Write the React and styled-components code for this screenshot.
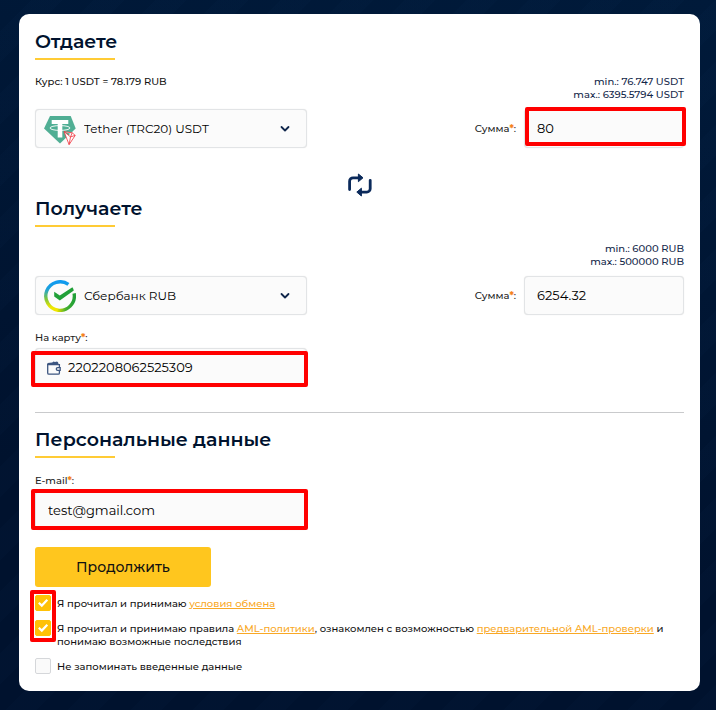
import { useId, useState } from 'react';
import styled, { createGlobalStyle } from 'styled-components';

const GlobalStyle = createGlobalStyle`
  * {
    box-sizing: border-box;
  }
  body {
    margin: 0;
    background-color: #00122e;
    background-image: repeating-linear-gradient(
        135deg,
        rgba(255, 255, 255, 0) 0 22px,
        rgba(60, 120, 190, 0.02) 22px 44px
      ),
      linear-gradient(10deg, #00122e 30%, #001a3a 100%);
    color: #111;
    font-family: Montserrat, Inter, 'Liberation Sans', sans-serif;
    font-size: 10px;
    font-weight: 500;
    line-height: 13px;
  }
`;

const Page = styled.main`
  padding: 14px 16px 19px 19px;
`;

const Card = styled.form`
  background-color: #fff;
  border-radius: 10px;
  padding: 16px 16px 17px;
`;

const Title = styled.h2`
  margin: 0;
  color: #00122e;
  font-size: 19px;
  font-weight: 600;
  line-height: 24px;
  &::after {
    content: '';
    display: block;
    width: 80px;
    height: 2px;
    margin-top: 4px;
    background-color: #ffcb35;
  }
`;

const InfoRow = styled.div`
  display: flex;
  justify-content: space-between;
  margin: 15px 0 8px;
  min-height: 26px;
`;

const Limits = styled.div`
  margin-left: auto;
  color: #14284a;
  text-align: right;
`;

const FieldRow = styled.div`
  display: flex;
  align-items: center;
  justify-content: space-between;
`;

const AmountField = styled.div`
  display: flex;
  align-items: center;
  gap: 8px;
`;

const FieldLabel = styled.label`
  color: #222;
  > span {
    color: #f58220;
    font-weight: 700;
  }
`;

const StackedField = styled.div`
  display: flex;
  flex-direction: column;
  align-items: flex-start;
  gap: 4px;
  margin-top: 16px;
`;

const InputWrap = styled.div`
  position: relative;
  width: ${({ $amount }) => ($amount ? '160px' : '272px')};
  max-width: 100%;
  > svg {
    position: absolute;
    top: 50%;
    transform: translateY(-50%);
    pointer-events: none;
  }
  > svg.currency {
    left: 9px;
  }
  > svg.wallet {
    left: 12px;
  }
  > svg.arrow {
    right: 17px;
  }
`;

const Input = styled.input`
  display: block;
  width: 100%;
  height: 39px;
  padding: 0 12px 2px ${({ $withIcon }) => ($withIcon ? '32px' : '12px')};
  border: 1px solid #e2e4e6;
  border-radius: 4px;
  outline: none;
  background-color: #fbfbfb;
  box-shadow: 0 0 1px rgba(0, 0, 0, 0.15);
  color: #000;
  font-family: inherit;
  font-size: 13px;
`;

const Select = styled.select`
  display: block;
  width: 100%;
  height: 39px;
  padding: 0 40px 1px 48px;
  border: 1px solid #e2e4e6;
  border-radius: 4px;
  outline: none;
  appearance: none;
  background-color: #fbfbfb;
  box-shadow: 0 0 1px rgba(0, 0, 0, 0.15);
  color: #000;
  font-family: inherit;
  font-size: 12px;
`;

// red frame over the fields the user has to fill in
const Marker = styled.span`
  position: absolute;
  inset: ${({ $inset }) => $inset};
  border: 4px solid #f00;
  border-radius: 2px;
  pointer-events: none;
`;

const SwapRow = styled.div`
  display: flex;
  justify-content: center;
  padding-top: 25px;
`;

const SwapButton = styled.button`
  display: block;
  padding: 0;
  border: 0;
  background: none;
  cursor: pointer;
  > svg {
    display: block;
  }
`;

const Divider = styled.hr`
  height: 1px;
  margin: 25px 0 15px;
  border: 0;
  background-color: #c9cacc;
`;

const SubmitButton = styled.button`
  display: block;
  width: 176px;
  height: 40px;
  margin: 17px 0 8px;
  border: 0;
  border-radius: 3px;
  background-color: #ffc61e;
  color: #111;
  font-family: inherit;
  font-size: 14px;
  font-weight: 500;
  cursor: pointer;
`;

const Agreements = styled.div`
  display: flex;
  flex-direction: column;
  gap: 9px;
`;

const RequiredAgreements = styled.div`
  position: relative;
  display: flex;
  flex-direction: column;
  gap: 9px;
  > span {
    right: auto;
    width: 26px;
    height: 52px;
  }
`;

const CheckRow = styled.div`
  display: flex;
  align-items: flex-start;
  gap: 6px;
  > label {
    padding: 2px 0 1px;
  }
  a {
    color: #f9a825;
    text-decoration: underline;
  }
`;

const Checkbox = styled.input`
  flex: none;
  width: 16px;
  height: 16px;
  margin: 0;
  border: 1px solid #d5d7da;
  border-radius: 2px;
  appearance: none;
  background-color: #fafafa;
  &:checked {
    border-color: #ffc107;
    background-color: #ffc107;
    background-image: url("data:image/svg+xml,%3Csvg xmlns='http://www.w3.org/2000/svg' viewBox='0 0 14 14'%3E%3Cpath d='M2.8 6.8L5.8 9.6L11.3 3.8' fill='none' stroke='white' stroke-width='2.2'/%3E%3C/svg%3E");
  }
`;

function TetherIcon() {
  return (
    <svg className="currency" width="32" height="34" viewBox="0 0 32 34">
      <path d="M6 4h20.7l5 12.6L16 31.6 0 16.6z" fill="#50ae94" />
      <path d="M7.7 8h16.6v4h-6v13.6h-4.6V12h-6z" fill="#fff" />
      <ellipse
        cx="16"
        cy="16"
        rx="10"
        ry="2.4"
        fill="none"
        stroke="#fff"
        strokeWidth="0.9"
      />
      <path
        d="M20 19.6l8.2 1.2 3 2.6-6.1 9.2zM20 19.6l6.5 5.3 4.7-1.5M26.5 24.9l-1.4 7.7M26.5 24.9l1.7-4.1"
        fill="#fff"
        stroke="#f0323c"
        strokeWidth="0.8"
        strokeLinejoin="round"
      />
    </svg>
  );
}

function SberIcon() {
  return (
    <svg className="currency" width="32" height="32" viewBox="0 0 32 32">
      <defs>
        <linearGradient id="sberLeft" x1="0" y1="0" x2="0" y2="1">
          <stop offset="0" stopColor="#0f9af0" />
          <stop offset="0.25" stopColor="#1ba0dc" />
          <stop offset="0.6" stopColor="#7cc63c" />
          <stop offset="0.9" stopColor="#f0e600" />
        </linearGradient>
        <linearGradient id="sberRight" x1="0" y1="0" x2="1" y2="0">
          <stop offset="0" stopColor="#e2e000" />
          <stop offset="0.5" stopColor="#45ae2c" />
          <stop offset="1" stopColor="#21a038" />
        </linearGradient>
      </defs>
      <g fill="none" strokeWidth="3.4">
        <path
          d="M24.4 4.4A14.3 14.3 0 1 0 14 30.2"
          stroke="url(#sberLeft)"
        />
        <path
          d="M13.5 30.1A14.3 14.3 0 0 0 30.1 13.4"
          stroke="url(#sberRight)"
        />
      </g>
      <path
        d="M10.2 11.8l5.6 3.6L28.4 7.2c.7 1 1.1 2 1.4 3.4L15.8 20.4l-5.6-3.8z"
        fill="#21a038"
      />
    </svg>
  );
}

function WalletIcon() {
  return (
    <svg className="wallet" width="14" height="14" viewBox="0 0 14 14">
      <g fill="none" stroke="#3d5680" strokeWidth="1.3">
        <path d="M12.4 6V3.6H.7V11.9c0 .8.4 1.2 1.2 1.2h9.3c.8 0 1.2-.4 1.2-1.2V10" />
        <path d="M13.2 6.6h-2.5a1.4 1.4 0 0 0 0 2.8h2.5z" />
      </g>
      <path
        d="M0 3.8L.6 2l4.6-.6L6.6.4 8 1l2-.6 1 .8.8 2.6z"
        fill="#3d5680"
      />
    </svg>
  );
}

function ArrowIcon() {
  return (
    <svg className="arrow" width="10" height="8" viewBox="0 0 10 8">
      <path
        d="M1.5 2L5 5.5 8.5 2"
        fill="none"
        stroke="#10264b"
        strokeWidth="1.8"
        strokeLinecap="round"
        strokeLinejoin="round"
      />
    </svg>
  );
}

function SwapIcon() {
  return (
    <svg width="24" height="24" viewBox="0 0 24 24">
      <g
        fill="none"
        stroke="#0b2a5b"
        strokeWidth="2.8"
        strokeLinecap="round"
        strokeLinejoin="round"
      >
        <path d="M1.6 16.5V8.2a3.4 3.4 0 0 1 3.4-3.4h6.5" />
        <path d="M22.2 7.3v8.4a3.4 3.4 0 0 1-3.4 3.4h-6.5" />
      </g>
      <g fill="#0b2a5b" stroke="#0b2a5b" strokeWidth="1" strokeLinejoin="round">
        <path d="M10.4 1L15 4.8l-4.6 3.9z" />
        <path d="M13.4 15.2l-4.6 3.9 4.6 3.9z" />
      </g>
    </svg>
  );
}

function Amount({ value, marked }) {
  const id = useId();

  return (
    <AmountField>
      <FieldLabel htmlFor={id}>
        Сумма<span>*</span>:
      </FieldLabel>
      <InputWrap $amount>
        <Input id={id} defaultValue={value} inputMode="decimal" />
        {marked && <Marker $inset="-2px -2px 2px 1px" />}
      </InputWrap>
    </AmountField>
  );
}

function Currency({ icon, name, label }) {
  return (
    <InputWrap>
      <Select aria-label={label}>
        <option>{name}</option>
      </Select>
      {icon}
      <ArrowIcon />
    </InputWrap>
  );
}

function Agreement({ initial, children }) {
  const id = useId();
  const [checked, setChecked] = useState(initial);

  return (
    <CheckRow>
      <Checkbox
        id={id}
        type="checkbox"
        checked={checked}
        onChange={(e) => setChecked(e.target.checked)}
      />
      <label htmlFor={id}>{children}</label>
    </CheckRow>
  );
}

function App() {
  return (
    <>
      <GlobalStyle />
      <Page>
        <Card onSubmit={(e) => e.preventDefault()}>
          <Title>Отдаете</Title>
          <InfoRow>
            <div>Курс: 1 USDT = 78.179 RUB</div>
            <Limits>
              <div>min.: 76.747 USDT</div>
              <div>max.: 6395.5794 USDT</div>
            </Limits>
          </InfoRow>
          <FieldRow>
            <Currency
              icon={<TetherIcon />}
              name="Tether (TRC20) USDT"
              label="Отдаете"
            />
            <Amount value="80" marked />
          </FieldRow>

          <SwapRow>
            <SwapButton type="button" aria-label="Поменять местами">
              <SwapIcon />
            </SwapButton>
          </SwapRow>

          <Title>Получаете</Title>
          <InfoRow>
            <Limits>
              <div>min.: 6000 RUB</div>
              <div>max.: 500000 RUB</div>
            </Limits>
          </InfoRow>
          <FieldRow>
            <Currency
              icon={<SberIcon />}
              name="Сбербанк RUB"
              label="Получаете"
            />
            <Amount value="6254.32" />
          </FieldRow>
          <StackedField>
            <FieldLabel htmlFor="card">
              На карту<span>*</span>:
            </FieldLabel>
            <InputWrap>
              <Input id="card" defaultValue="2202208062525309" $withIcon />
              <WalletIcon />
              <Marker $inset="3px -1px 0 -4px" />
            </InputWrap>
          </StackedField>

          <Divider />

          <Title>Персональные данные</Title>
          <StackedField>
            <FieldLabel htmlFor="email">
              E-mail<span>*</span>:
            </FieldLabel>
            <InputWrap>
              <Input id="email" type="email" defaultValue="test@gmail.com" />
              <Marker $inset="-2px -1px 0 -4px" />
            </InputWrap>
          </StackedField>

          <SubmitButton type="submit">Продолжить</SubmitButton>

          <Agreements>
            <RequiredAgreements>
              <Agreement initial>
                Я прочитал и принимаю <a href="#rules">условия обмена</a>
              </Agreement>
              <Agreement initial>
                Я прочитал и принимаю правила <a href="#aml">AML-политики</a>,
                ознакомлен с возможностью{' '}
                <a href="#aml-check">предварительной AML-проверки</a> и понимаю
                возможные последствия
              </Agreement>
              <Marker $inset="-5px auto auto -5px" />
            </RequiredAgreements>
            <Agreement initial={false}>Не запоминать введенные данные</Agreement>
          </Agreements>
        </Card>
      </Page>
    </>
  );
}

export default App;
